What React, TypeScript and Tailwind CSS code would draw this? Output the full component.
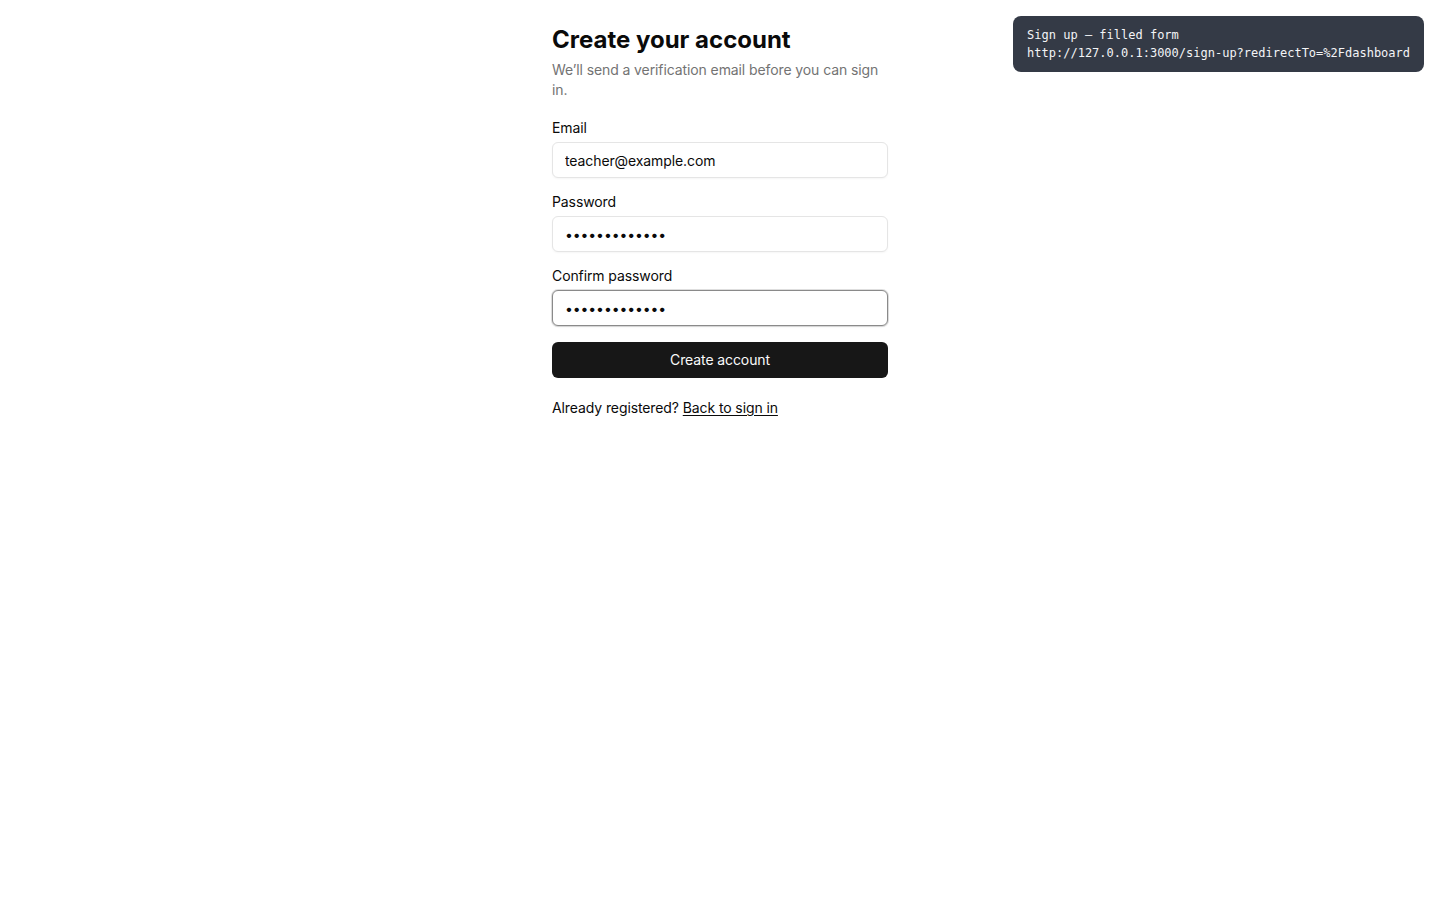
const fields = [
  { id: 'email', label: 'Email', type: 'email', value: 'teacher@example.com', focused: false },
  { id: 'password', label: 'Password', type: 'password', value: 'secretpass123', focused: false },
  { id: 'confirm', label: 'Confirm password', type: 'password', value: 'secretpass123', focused: true },
];

export default function App() {
  return (
    <div className="min-h-screen bg-white font-['Inter',sans-serif] text-[#0a0a0a]">
      <div className="fixed right-4 top-4 rounded-lg bg-[#343a46] px-3.5 py-2.5 font-['DejaVu_Sans_Mono',monospace] text-xs leading-[18px] text-[#f3f4f6]">
        <div>Sign up — filled form</div>
        <div>http://127.0.0.1:3000/sign-up?redirectTo=%2Fdashboard</div>
      </div>

      <main className="mx-auto w-[336px] pt-6 tracking-[-0.1px]">
        <h1 className="text-2xl leading-8 font-bold tracking-normal">Create your account</h1>
        <p className="mt-1 text-sm text-[#737373]">
          We&rsquo;ll send a verification email before you can sign in.
        </p>

        <form className="mt-[18px] flex flex-col gap-3.5" onSubmit={(e) => e.preventDefault()}>
          {fields.map((f) => (
            <div key={f.id} className="flex flex-col gap-1">
              <label htmlFor={f.id} className="text-sm leading-5">
                {f.label}
              </label>
              <input
                id={f.id}
                type={f.type}
                defaultValue={f.value}
                readOnly
                className={`h-9 w-full rounded-md border bg-white px-3 text-sm outline-none ${
                  f.focused
                    ? 'border-[#8a8a8a] shadow-[0_0_0_1px_rgba(163,163,163,0.35),0_1px_2px_rgba(0,0,0,0.08)]'
                    : 'border-[#e5e5e5] shadow-[0_1px_2px_rgba(0,0,0,0.04)]'
                }`}
              />
            </div>
          ))}

          <button
            type="submit"
            className="mt-0.5 h-9 w-full rounded-md bg-[#171717] text-sm text-[#fafafa]"
          >
            Create account
          </button>
        </form>

        <p className="mt-5 text-sm leading-5">
          Already registered?{' '}
          <a href="#" className="underline underline-offset-2">
            Back to sign in
          </a>
        </p>
      </main>
    </div>
  );
}
